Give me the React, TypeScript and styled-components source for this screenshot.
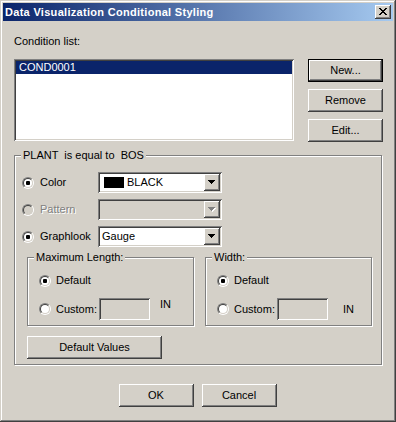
import React from "react";
import styled, { createGlobalStyle, css } from "styled-components";

const FACE = "#d4d0c8";
const SHADOW = "#808080";
const DARK = "#404040";
const HILITE = "#ffffff";
const FONT = `"Liberation Sans", Arial, sans-serif`;

const Global = createGlobalStyle`
  html, body { margin: 0; padding: 0; background: ${FACE}; }
  body { font-family: ${FONT}; font-size: 11px; color: #000; }
  * { box-sizing: border-box; }
`;

const raised = css`
  box-shadow: inset -1px -1px 0 ${DARK}, inset 1px 1px 0 ${HILITE},
    inset -2px -2px 0 ${SHADOW}, inset 2px 2px 0 ${FACE};
`;

const sunken = css`
  box-shadow: inset 1px 1px 0 ${SHADOW}, inset -1px -1px 0 ${HILITE},
    inset 2px 2px 0 ${DARK}, inset -2px -2px 0 ${FACE};
`;

const Window = styled.div`
  width: 396px;
  height: 422px;
  background: ${FACE};
  padding: 3px;
  display: flex;
  flex-direction: column;
  box-shadow: inset -1px -1px 0 ${DARK}, inset 1px 1px 0 ${FACE},
    inset -2px -2px 0 ${SHADOW}, inset 2px 2px 0 ${HILITE};
`;

const TitleBar = styled.div`
  height: 18px;
  flex: none;
  display: flex;
  align-items: center;
  padding: 0 2px 0 2px;
  background: linear-gradient(to right, #0a246a, #a6caf0);
`;

const TitleText = styled.div`
  flex: 1;
  color: #fff;
  font-weight: bold;
  font-size: 11px;
  line-height: 13px;
  white-space: nowrap;
  letter-spacing: 0.3px;
`;

const CloseButton = styled.div`
  width: 16px;
  height: 14px;
  background: ${FACE};
  ${raised};
  display: flex;
  align-items: center;
  justify-content: center;
  padding-bottom: 1px;
`;

const Body = styled.div`
  flex: 1;
  display: flex;
  flex-direction: column;
  padding: 14px 10px 0 11px;
`;

const Label = styled.div<{ $disabled?: boolean }>`
  line-height: 13px;
  white-space: pre;
  color: ${(p) => (p.$disabled ? SHADOW : "#000")};
  text-shadow: ${(p) => (p.$disabled ? `1px 1px 0 ${HILITE}` : "none")};
`;

const TopRow = styled.div`
  display: flex;
  align-items: flex-start;
  margin-top: 11px;
`;

const ListBox = styled.div`
  width: 280px;
  height: 82px;
  background: #fff;
  ${sunken};
  padding: 2px;
`;

const ListItem = styled.div<{ $selected?: boolean }>`
  height: 13px;
  line-height: 13px;
  padding-left: 3px;
  background: ${(p) => (p.$selected ? "#0a246a" : "transparent")};
  color: ${(p) => (p.$selected ? "#fff" : "#000")};
`;

const ButtonColumn = styled.div`
  margin-left: 14px;
  display: flex;
  flex-direction: column;
  gap: 7px;
`;

const Button = styled.div<{ $w?: number; $h?: number; $default?: boolean }>`
  width: ${(p) => p.$w ?? 75}px;
  height: ${(p) => p.$h ?? 23}px;
  background: ${FACE};
  display: flex;
  align-items: center;
  justify-content: center;
  line-height: 13px;
  ${(p) =>
    p.$default
      ? css`
          box-shadow: inset 0 0 0 1px #000, inset -2px -2px 0 ${DARK},
            inset 2px 2px 0 ${HILITE}, inset -3px -3px 0 ${SHADOW};
        `
      : raised};
`;

const GroupBox = styled.div<{ $w?: number; $h?: number }>`
  position: relative;
  border: 1px solid ${SHADOW};
  box-shadow: 1px 1px 0 ${HILITE}, inset 1px 1px 0 ${HILITE};
  ${(p) => (p.$w ? `width: ${p.$w}px;` : "")}
  ${(p) => (p.$h ? `height: ${p.$h}px;` : "")}
`;

const MainGroup = styled(GroupBox)`
  margin-top: 13px;
  width: 368px;
  padding: 16px 0 5px 7px;
  display: flex;
  flex-direction: column;
`;

const Caption = styled.span`
  position: absolute;
  top: -7px;
  left: 6px;
  padding: 0 2px;
  background: ${FACE};
  line-height: 13px;
  white-space: pre;
`;

const OptionGrid = styled.div`
  display: grid;
  grid-template-columns: 76px 124px;
  row-gap: 6px;
  align-items: center;
`;

const RadioLabel = styled.div`
  display: flex;
  align-items: center;
  gap: 6px;
`;

const RadioOuter = styled.span`
  width: 12px;
  height: 12px;
  flex: none;
  border-radius: 50%;
  border: 1px solid;
  border-color: ${SHADOW} ${HILITE} ${HILITE} ${SHADOW};
  display: flex;
`;

const RadioInner = styled.span<{ $disabled?: boolean }>`
  width: 10px;
  height: 10px;
  border-radius: 50%;
  border: 1px solid;
  border-color: ${DARK} ${FACE} ${FACE} ${DARK};
  background: ${(p) => (p.$disabled ? FACE : "#fff")};
  display: flex;
  align-items: center;
  justify-content: center;
`;

const RadioDot = styled.span`
  width: 4px;
  height: 4px;
  border-radius: 1px;
  background: #000;
`;

const Radio = ({ checked, disabled }: { checked?: boolean; disabled?: boolean }) => (
  <RadioOuter>
    <RadioInner $disabled={disabled}>{checked && <RadioDot />}</RadioInner>
  </RadioOuter>
);

const Combo = styled.div<{ $disabled?: boolean }>`
  height: 21px;
  ${sunken};
  background: ${(p) => (p.$disabled ? FACE : "#fff")};
  padding: 2px;
  display: flex;
  align-items: center;
`;

const ComboValue = styled.div`
  flex: 1;
  display: flex;
  align-items: center;
  gap: 3px;
  padding-left: 2px;
  line-height: 13px;
`;

const Swatch = styled.span<{ $color: string }>`
  width: 20px;
  height: 11px;
  background: ${(p) => p.$color};
  margin-left: 2px;
`;

const ArrowButton = styled.div`
  width: 16px;
  height: 17px;
  background: ${FACE};
  ${raised};
  display: flex;
  align-items: center;
  justify-content: center;
`;

const Arrow = ({ disabled }: { disabled?: boolean }) => (
  <svg width="8" height="5" viewBox="0 0 8 5" shapeRendering="crispEdges">
    {disabled && <polygon points="1,1 8,1 4.5,5" fill="#fff" />}
    <polygon points="0,0 7,0 3.5,4" fill={disabled ? SHADOW : "#000"} />
  </svg>
);

const SubGroupRow = styled.div`
  display: flex;
  gap: 11px;
  margin-top: 10px;
  padding-left: 5px;
`;

const SubGroup = styled(GroupBox)`
  width: 167px;
  height: 69px;
  padding: 16px 0 0 11px;
  display: flex;
  flex-direction: column;
  gap: 11px;
`;

const SubRow = styled.div`
  display: flex;
  align-items: center;
`;

const SubLabel = styled.div`
  margin-left: 5px;
  width: 43px;
  line-height: 13px;
`;

const EditBox = styled.div`
  width: 51px;
  height: 22px;
  background: ${FACE};
  ${sunken};
`;

const Unit = styled.div<{ $gap: number; $raise: number }>`
  margin-left: ${(p) => p.$gap}px;
  line-height: 13px;
  position: relative;
  top: ${(p) => -p.$raise}px;
`;

const DefaultValuesRow = styled.div`
  margin-top: 10px;
  padding-left: 5px;
`;

const Footer = styled.div`
  display: flex;
  justify-content: center;
  gap: 8px;
  margin-top: 19px;
  padding-right: 2px;
`;

const CloseGlyph = () => {
  const rows = ["XX....XX", ".XX..XX.", "..XXXX..", "...XX...", "..XXXX..", ".XX..XX.", "XX....XX"];
  return (
    <svg width="8" height="7" viewBox="0 0 8 7" shapeRendering="crispEdges">
      {rows.flatMap((r, y) =>
        r.split("").map((c, x) => (c === "X" ? <rect key={`${x}-${y}`} x={x} y={y} width="1" height="1" fill="#000" /> : null))
      )}
    </svg>
  );
};

export default function App() {
  return (
    <>
      <Global />
      <Window>
        <TitleBar>
          <TitleText>Data Visualization Conditional Styling</TitleText>
          <CloseButton>
            <CloseGlyph />
          </CloseButton>
        </TitleBar>
        <Body>
          <Label>Condition list:</Label>
          <TopRow>
            <ListBox>
              <ListItem $selected>COND0001</ListItem>
            </ListBox>
            <ButtonColumn>
              <Button $default>New...</Button>
              <Button>Remove</Button>
              <Button>Edit...</Button>
            </ButtonColumn>
          </TopRow>

          <MainGroup>
            <Caption>PLANT  is equal to  BOS</Caption>
            <OptionGrid>
              <RadioLabel>
                <Radio checked />
                <Label>Color</Label>
              </RadioLabel>
              <Combo>
                <ComboValue>
                  <Swatch $color="#000" />
                  <span>BLACK</span>
                </ComboValue>
                <ArrowButton>
                  <Arrow />
                </ArrowButton>
              </Combo>

              <RadioLabel>
                <Radio disabled />
                <Label $disabled>Pattern</Label>
              </RadioLabel>
              <Combo $disabled>
                <ComboValue />
                <ArrowButton>
                  <Arrow disabled />
                </ArrowButton>
              </Combo>

              <RadioLabel>
                <Radio checked />
                <Label>Graphlook</Label>
              </RadioLabel>
              <Combo>
                <ComboValue>
                  <span>Gauge</span>
                </ComboValue>
                <ArrowButton>
                  <Arrow />
                </ArrowButton>
              </Combo>
            </OptionGrid>

            <SubGroupRow>
              <SubGroup>
                <Caption>Maximum Length:</Caption>
                <SubRow>
                  <Radio checked />
                  <SubLabel>Default</SubLabel>
                </SubRow>
                <SubRow>
                  <Radio />
                  <SubLabel>Custom:</SubLabel>
                  <EditBox />
                  <Unit $gap={10} $raise={5}>IN</Unit>
                </SubRow>
              </SubGroup>
              <SubGroup>
                <Caption>Width:</Caption>
                <SubRow>
                  <Radio checked />
                  <SubLabel>Default</SubLabel>
                </SubRow>
                <SubRow>
                  <Radio />
                  <SubLabel>Custom:</SubLabel>
                  <EditBox />
                  <Unit $gap={15} $raise={0}>IN</Unit>
                </SubRow>
              </SubGroup>
            </SubGroupRow>

            <DefaultValuesRow>
              <Button $w={135}>Default Values</Button>
            </DefaultValuesRow>
          </MainGroup>

          <Footer>
            <Button>OK</Button>
            <Button>Cancel</Button>
          </Footer>
        </Body>
      </Window>
    </>
  );
}
